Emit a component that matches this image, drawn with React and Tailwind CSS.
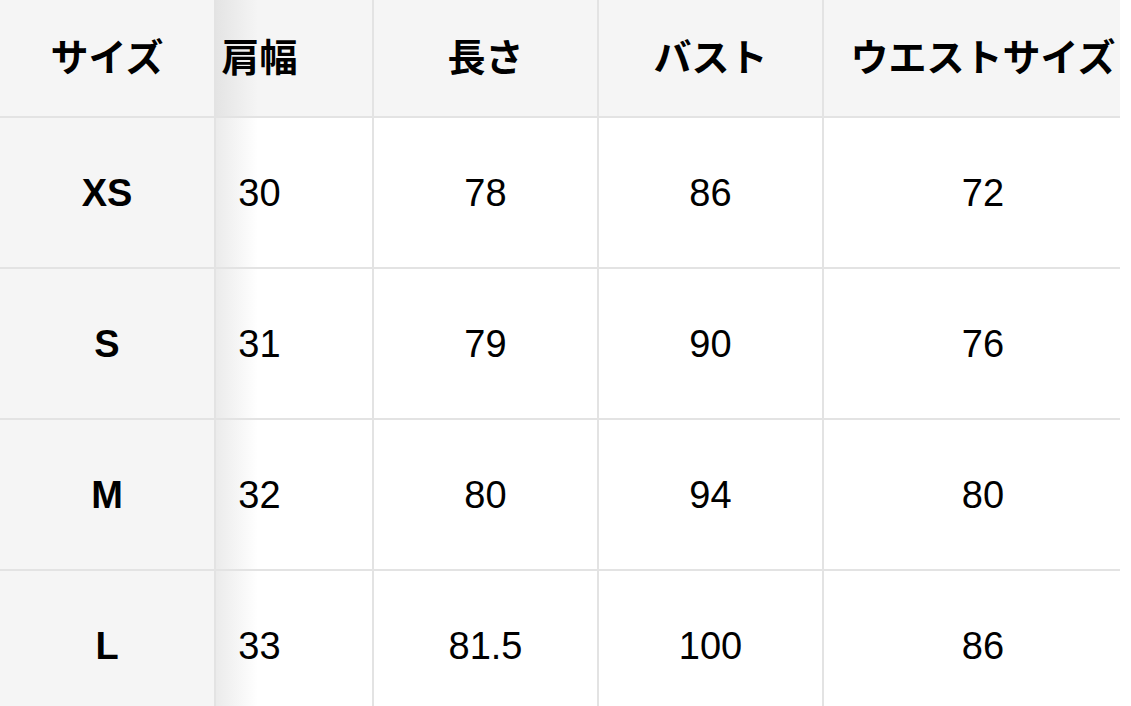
import React from "react";

const headers = ["サイズ", "肩幅", "長さ", "バスト", "ウエストサイズ"];
const rows = [
  ["XS", "30", "78", "86", "72"],
  ["S", "31", "79", "90", "76"],
  ["M", "32", "80", "94", "80"],
  ["L", "33", "81.5", "100", "86"],
];

const font = { fontFamily: '"Liberation Sans", "Noto Sans CJK JP", sans-serif' };

function Cell({ col, header, children }) {
  let cls = "flex items-center justify-center text-[38px] leading-none text-black ";
  if (col === 0) cls += "bg-[#f5f5f5] font-bold ";
  else if (col === 1)
    cls += header
      ? "pr-[69px] bg-[linear-gradient(to_right,#e4e4e4,#f5f5f5_42px)] "
      : "pr-[69px] bg-[linear-gradient(to_right,#ebebeb,#ffffff_42px)] ";
  else if (header) cls += "bg-[#f5f5f5] ";
  else cls += "bg-white ";
  if (col === 4) cls += "pl-[22px] ";
  if (header) cls += "font-bold ";
  return <div className={cls}>{children}</div>;
}

export default function App() {
  return (
    <div className="w-[1131px] h-[706px] overflow-hidden bg-white" style={font}>
      <div className="w-[1120px] grid grid-cols-[214px_156px_223px_223px_296px] grid-rows-[116px_149px_149px_149px_149px] gap-[2px] bg-[#e3e3e3]">
        {headers.map((h, i) => (
          <Cell key={"h" + i} col={i} header>
            {h}
          </Cell>
        ))}
        {rows.map((r, ri) =>
          r.map((v, ci) => (
            <Cell key={ri + "-" + ci} col={ci}>
              {v}
            </Cell>
          ))
        )}
      </div>
    </div>
  );
}
